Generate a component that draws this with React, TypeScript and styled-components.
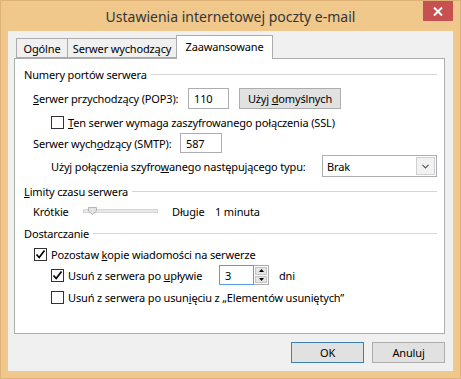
import React from "react";
import styled, { createGlobalStyle } from "styled-components";

const GlobalStyle = createGlobalStyle`
  html, body {
    margin: 0;
    padding: 0;
  }
  body {
    font-family: "Noto Sans", "Open Sans", sans-serif;
    font-size: 11px;
    letter-spacing: -0.15px;
    color: #000;
  }
`;

const Frame = styled.div`
  width: 461px;
  height: 379px;
  box-sizing: border-box;
  background: #f0c88c;
  border: 1px solid #deb276;
  padding: 0 7px 7px;
  display: flex;
  flex-direction: column;
`;

const TitleBar = styled.div`
  height: 30px;
  display: grid;
  grid-template-columns: 1fr auto 1fr;
`;

const Title = styled.div`
  grid-column: 2;
  align-self: center;
  font-size: 14px;
  letter-spacing: 0;
  color: #353535;
  padding-top: 1px;
`;

const CloseButton = styled.div`
  grid-column: 3;
  justify-self: end;
  align-self: start;
  width: 30px;
  height: 20px;
  background: #c75050;
  display: flex;
  align-items: center;
  justify-content: center;
`;

const Client = styled.div`
  flex: 1;
  background: #f0f0f0;
  padding: 4px 8px 0 6px;
  display: flex;
  flex-direction: column;
`;

const TabStrip = styled.div`
  display: flex;
  align-items: flex-end;
  padding-left: 2px;
  height: 24px;
  margin-bottom: -1px;
  position: relative;
  z-index: 1;
`;

const Tab = styled.div<{ $active?: boolean; $w: number }>`
  box-sizing: border-box;
  width: ${(p) => p.$w}px;
  height: ${(p) => (p.$active ? 24 : 20)}px;
  margin-bottom: ${(p) => (p.$active ? 0 : 1)}px;
  margin-left: -1px;
  &:first-child {
    margin-left: 0;
  }
  border: 1px solid #acacac;
  border-bottom: ${(p) => (p.$active ? "none" : "1px solid #acacac")};
  background: ${(p) => (p.$active ? "#fff" : "#f0f0f0")};
  display: flex;
  align-items: center;
  justify-content: center;
  padding-bottom: ${(p) => (p.$active ? 3 : 0)}px;
  white-space: nowrap;
`;

const Panel = styled.div`
  box-sizing: border-box;
  height: 276px;
  background: #fff;
  border: 1px solid #adadad;
  padding: 0 7px 0 9px;
  display: flex;
  flex-direction: column;
`;

const GroupHeader = styled.div<{ $mt: number }>`
  margin-top: ${(p) => p.$mt}px;
  height: 16px;
  display: flex;
  align-items: center;
  gap: 4px;
  white-space: nowrap;
  &::after {
    content: "";
    flex: 1;
    height: 1px;
    background: #d5d5d5;
  }
`;

const Row = styled.div<{ $mt: number; $h?: number; $indent: number }>`
  margin-top: ${(p) => p.$mt}px;
  height: ${(p) => p.$h ?? 16}px;
  padding-left: ${(p) => p.$indent}px;
  display: flex;
  align-items: center;
  white-space: nowrap;
`;

const Label = styled.span<{ $w?: number; $ml?: number }>`
  display: inline-block;
  width: ${(p) => (p.$w ? `${p.$w}px` : "auto")};
  margin-left: ${(p) => p.$ml ?? 0}px;
  flex-shrink: 0;
`;

const U = styled.span`
  text-decoration: underline;
`;

const Field = styled.div<{ $w: number; $h: number; $focus?: boolean }>`
  box-sizing: border-box;
  width: ${(p) => p.$w}px;
  height: ${(p) => p.$h}px;
  border: 1px solid ${(p) => (p.$focus ? "#569de5" : "#abadb3")};
  background: #fff;
  padding-left: 5px;
  display: flex;
  align-items: center;
`;

const PushButton = styled.div<{ $w: number; $default?: boolean; $ml?: number }>`
  box-sizing: border-box;
  width: ${(p) => p.$w}px;
  height: 21px;
  margin-left: ${(p) => p.$ml ?? 0}px;
  background: #e1e1e1;
  border: 1px solid ${(p) => (p.$default ? "#3c7fb1" : "#adadad")};
  display: flex;
  align-items: center;
  justify-content: center;
`;

const Box = styled.div`
  box-sizing: border-box;
  width: 13px;
  height: 13px;
  border: 1px solid #333;
  background: #fff;
  margin-right: 4px;
  flex-shrink: 0;
  display: flex;
  align-items: center;
  justify-content: center;
`;

const Combo = styled.div`
  box-sizing: border-box;
  width: 115px;
  height: 22px;
  border: 1px solid #abadb3;
  background: #fff;
  display: flex;
  align-items: stretch;
`;

const ComboText = styled.div`
  flex: 1;
  padding-left: 4px;
  display: flex;
  align-items: center;
`;

const ComboArrow = styled.div`
  width: 17px;
  margin: 1px;
  background: #f2f2f2;
  border: 1px solid #d0d0d0;
  display: flex;
  align-items: center;
  justify-content: center;
`;

const Track = styled.div`
  position: relative;
  box-sizing: border-box;
  width: 75px;
  height: 4px;
  background: #e7eaea;
  border: 1px solid #d6d6d6;
`;

const Thumb = styled.svg`
  position: absolute;
  left: 4px;
  top: -3px;
`;

const Spin = styled.div`
  display: flex;
  align-items: stretch;
  height: 20px;
`;

const SpinButtons = styled.div`
  width: 15px;
  box-sizing: border-box;
  border: 1px solid #acacac;
  border-left: none;
  display: flex;
  flex-direction: column;
  padding: 1px;
  gap: 1px;
  background: #fff;
`;

const SpinHalf = styled.div`
  flex: 1;
  background: #e5e5e5;
  border: 1px solid #c5c5c5;
  display: flex;
  align-items: center;
  justify-content: center;
`;

const ButtonRow = styled.div`
  margin-top: 8px;
  display: flex;
  justify-content: flex-end;
  gap: 8px;
`;

function Check({ checked }: { checked?: boolean }) {
  return (
    <Box>
      {checked && (
        <svg width="11" height="11" viewBox="0 0 11 11">
          <path d="M1.5 5.5 L4.2 8.5 L9.5 1.5" fill="none" stroke="#000" strokeWidth="1.7" />
        </svg>
      )}
    </Box>
  );
}

export default function App() {
  return (
    <>
      <GlobalStyle />
      <Frame>
        <TitleBar>
          <Title>Ustawienia internetowej poczty e-mail</Title>
          <CloseButton>
            <svg width="10" height="9" viewBox="0 0 10 9">
              <path d="M1 0.5 L9 8.5 M9 0.5 L1 8.5" stroke="#fff" strokeWidth="2" />
            </svg>
          </CloseButton>
        </TitleBar>
        <Client>
          <TabStrip>
            <Tab $w={52}>Ogólne</Tab>
            <Tab $w={110}>Serwer wychodzący</Tab>
            <Tab $active $w={97}>Zaawansowane</Tab>
          </TabStrip>
          <Panel>
            <GroupHeader $mt={7}>Numery portów serwera</GroupHeader>
            <Row $mt={6} $h={21} $indent={9}>
              <Label $w={155}>
                <U>S</U>erwer przychodzący (POP3):
              </Label>
              <Field $w={41} $h={21}>110</Field>
              <PushButton $w={102} $ml={10}>
                Użyj&nbsp;<U>d</U>omyślnych
              </PushButton>
            </Row>
            <Row $mt={5} $indent={27}>
              <Check />
              <Label>
                <U>T</U>en serwer wymaga zaszyfrowanego połączenia (SSL)
              </Label>
            </Row>
            <Row $mt={3} $h={20} $indent={9}>
              <Label $w={147}>
                Serwer wych<U>o</U>dzący (SMTP):
              </Label>
              <Field $w={42} $h={20}>587</Field>
            </Row>
            <Row $mt={2} $h={22} $indent={27}>
              <Label $w={271}>
                Użyj połączenia szyfro<U>w</U>anego następującego typu:
              </Label>
              <Combo>
                <ComboText>Brak</ComboText>
                <ComboArrow>
                  <svg width="7" height="5" viewBox="0 0 7 5">
                    <path d="M0.5 0.8 L3.5 3.8 L6.5 0.8" fill="none" stroke="#555" strokeWidth="1.2" />
                  </svg>
                </ComboArrow>
              </Combo>
            </Row>
            <GroupHeader $mt={6}>
              <span>
                <U>L</U>imity czasu serwera
              </span>
            </GroupHeader>
            <Row $mt={4} $indent={9}>
              <Label $w={50}>Krótkie</Label>
              <Track>
                <Thumb width="9" height="8" viewBox="0 0 9 8">
                  <path d="M0.5 0.5 H8.5 V4 L4.5 7.5 L0.5 4 Z" fill="#e3e3e3" stroke="#b5b5b5" />
                </Thumb>
              </Track>
              <Label $w={43} $ml={14}>
                Długie
              </Label>
              <Label>1 minuta</Label>
            </Row>
            <GroupHeader $mt={6}>Dostarczanie</GroupHeader>
            <Row $mt={5} $indent={10}>
              <Check checked />
              <Label>
                Pozostaw <U>k</U>opie wiadomości na serwerze
              </Label>
            </Row>
            <Row $mt={3} $h={20} $indent={27}>
              <Check checked />
              <Label $w={151}>
                Usuń z serwera po <U>u</U>pływie
              </Label>
              <Spin>
                <Field $w={35} $h={20} $focus>
                  3
                </Field>
                <SpinButtons>
                  <SpinHalf>
                    <svg width="5" height="3" viewBox="0 0 5 3">
                      <path d="M0 3 L2.5 0 L5 3 Z" fill="#000" />
                    </svg>
                  </SpinHalf>
                  <SpinHalf>
                    <svg width="5" height="3" viewBox="0 0 5 3">
                      <path d="M0 0 L2.5 3 L5 0 Z" fill="#000" />
                    </svg>
                  </SpinHalf>
                </SpinButtons>
              </Spin>
              <Label $ml={10}>dni</Label>
            </Row>
            <Row $mt={4} $indent={27}>
              <Check />
              <Label>
                Usuń z serwera po usun<U>i</U>ęciu z „Elementów usuniętych”
              </Label>
            </Row>
          </Panel>
          <ButtonRow>
            <PushButton $w={73} $default>
              OK
            </PushButton>
            <PushButton $w={73}>Anuluj</PushButton>
          </ButtonRow>
        </Client>
      </Frame>
    </>
  );
}
